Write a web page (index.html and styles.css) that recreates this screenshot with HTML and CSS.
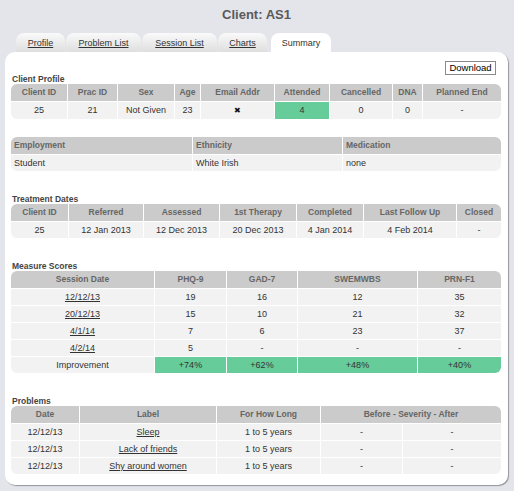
FILE: index.html
```html
<!DOCTYPE html>
<html lang="en">
<head>
    <meta charset="UTF-8" />
    <title>Client: AS1</title>
    <link rel="stylesheet" href="styles.css">
</head>
<body>
    <h1 class="title">Client: AS1</h1>

    <nav class="tabs">
        <a href="#" class="tab tab-profile">Profile</a>
        <a href="#" class="tab tab-problems">Problem List</a>
        <a href="#" class="tab tab-sessions">Session List</a>
        <a href="#" class="tab tab-charts">Charts</a>
        <span class="tab tab-summary active">Summary</span>
    </nav>

    <div class="panel">
        <div class="toolbar">
            <button class="download">Download</button>
        </div>

        <!-- Perfil del cliente -->
        <div class="section first">
            <div class="label">Client Profile</div>
            <div class="grid">
                <table class="tall">
                    <tr>
                        <th class="w56">Client ID</th>
                        <th class="w50">Prac ID</th>
                        <th class="w57">Sex</th>
                        <th class="w26">Age</th>
                        <th class="w74">Email Addr</th>
                        <th class="w55">Attended</th>
                        <th class="w63">Cancelled</th>
                        <th class="w30">DNA</th>
                        <th>Planned End</th>
                    </tr>
                    <tr>
                        <td>25</td>
                        <td>21</td>
                        <td>Not Given</td>
                        <td>23</td>
                        <td><span class="cross">✖</span></td>
                        <td class="good">4</td>
                        <td>0</td>
                        <td>0</td>
                        <td>-</td>
                    </tr>
                </table>
            </div>
        </div>

        <div class="section plain">
            <div class="grid">
                <table class="left">
                    <tr>
                        <th class="w181">Employment</th>
                        <th class="w150">Ethnicity</th>
                        <th>Medication</th>
                    </tr>
                    <tr>
                        <td>Student</td>
                        <td>White Irish</td>
                        <td>none</td>
                    </tr>
                </table>
            </div>
        </div>

        <div class="section">
            <div class="label">Treatment Dates</div>
            <div class="grid">
                <table>
                    <tr>
                        <th class="w57">Client ID</th>
                        <th class="w75">Referred</th>
                        <th class="w76">Assessed</th>
                        <th class="w77">1st Therapy</th>
                        <th class="w67">Completed</th>
                        <th class="w93">Last Follow Up</th>
                        <th>Closed</th>
                    </tr>
                    <tr>
                        <td>25</td>
                        <td>12 Jan 2013</td>
                        <td>12 Dec 2013</td>
                        <td>20 Dec 2013</td>
                        <td>4 Jan 2014</td>
                        <td>4 Feb 2014</td>
                        <td>-</td>
                    </tr>
                </table>
            </div>
        </div>

        <div class="section">
            <div class="label">Measure Scores</div>
            <div class="grid">
                <table>
                    <tr>
                        <th class="w143">Session Date</th>
                        <th class="w72">PHQ-9</th>
                        <th class="w71">GAD-7</th>
                        <th class="w120">SWEMWBS</th>
                        <th>PRN-F1</th>
                    </tr>
                    <tr><td><a href="#">12/12/13</a></td><td>19</td><td>16</td><td>12</td><td>35</td></tr>
                    <tr><td><a href="#">20/12/13</a></td><td>15</td><td>10</td><td>21</td><td>32</td></tr>
                    <tr><td><a href="#">4/1/14</a></td><td>7</td><td>6</td><td>23</td><td>37</td></tr>
                    <tr><td><a href="#">4/2/14</a></td><td>5</td><td>-</td><td>-</td><td>-</td></tr>
                    <tr>
                        <td>Improvement</td>
                        <td class="good">+74%</td>
                        <td class="good">+62%</td>
                        <td class="good">+48%</td>
                        <td class="good">+40%</td>
                    </tr>
                </table>
            </div>
        </div>

        <div class="section">
            <div class="label">Problems</div>
            <div class="grid">
                <table>
                    <colgroup>
                        <col class="w68">
                        <col class="w137">
                        <col class="w104">
                        <col class="w82">
                        <col>
                    </colgroup>
                    <tr>
                        <th>Date</th>
                        <th>Label</th>
                        <th>For How Long</th>
                        <th colspan="2">Before - Severity - After</th>
                    </tr>
                    <tr>
                        <td>12/12/13</td>
                        <td><a href="#">Sleep</a></td>
                        <td>1 to 5 years</td>
                        <td>-</td>
                        <td>-</td>
                    </tr>
                    <tr>
                        <td>12/12/13</td>
                        <td><a href="#">Lack of friends</a></td>
                        <td>1 to 5 years</td>
                        <td>-</td>
                        <td>-</td>
                    </tr>
                    <tr>
                        <td>12/12/13</td>
                        <td><a href="#">Shy around women</a></td>
                        <td>1 to 5 years</td>
                        <td>-</td>
                        <td>-</td>
                    </tr>
                </table>
            </div>
        </div>
    </div>
</body>
</html>
```

FILE: styles.css
```css
body {
    margin: 0;
    padding: 0 6px 6px 5px;
    background-color: #e4e5ea;
    font-family: 'Liberation Sans', Arial, sans-serif;
    color: #333;
}

/* CABECERA */
.title {
    margin: 0;
    padding-top: 7px;
    height: 26px;
    box-sizing: border-box;
    text-align: center;
    font-size: 13px;
    font-weight: bold;
    color: #5a5a5a;
    line-height: 15px;
}

/* PESTAÑAS */
.tabs {
    display: flex;
    gap: 1px;
    padding-left: 11px;
    padding-top: 7px;
    height: 19px;
}

.tab {
    display: block;
    height: 19px;
    line-height: 20px;
    box-sizing: border-box;
    text-align: center;
    font-size: 9px;
    color: #333;
    border-radius: 8px 8px 0 0;
    background: linear-gradient(#fafafa, #dedede);
}

.tab-profile  { width: 49px; }
.tab-problems { width: 75px; }
.tab-sessions { width: 75px; }
.tab-charts   { width: 49px; }
.tab-summary  { width: 60px; margin-left: 3px; }

.tab.active {
    background: #fff;
}

/* PANEL */
.panel {
    background: #fff;
    border-radius: 10px;
    box-shadow: 1px 1px 1px rgba(0, 0, 0, 0.35);
    padding: 9px 7px 11px 6px;
}

.toolbar {
    display: flex;
    justify-content: flex-end;
    height: 13px;
    padding-right: 5px;
}

.download {
    height: 14px;
    width: 51px;
    padding: 0;
    margin: 0;
    font-family: 'Liberation Sans', Arial, sans-serif;
    font-size: 9.5px;
    color: #000;
    background: #fff;
    border: 1px solid #8a8a8a;
    border-radius: 0;
    line-height: 12px;
}

.section {
    margin-top: 23px;
}

.section.first {
    margin-top: 0;
}

.section.plain {
    margin-top: 18px;
}

.label {
    height: 10px;
    font-size: 8.5px;
    font-weight: bold;
    color: #444;
    line-height: 10px;
    padding-left: 1px;
}

/* TABLAS */
.grid {
    border-radius: 6px;
    overflow: hidden;
}

table {
    width: 100%;
    border-collapse: separate;
    border-spacing: 0;
    table-layout: fixed;
    font-size: 9px;
}

th, td {
    box-sizing: border-box;
    padding: 0;
    text-align: center;
    white-space: nowrap;
    overflow: hidden;
}

th {
    height: 17px;
    background: #cbcbcb;
    color: #666;
    font-size: 8.5px;
    font-weight: bold;
    line-height: 17px;
}

td {
    height: 17px;
    background: #f2f2f2;
    color: #333;
    line-height: 16px;
    border-top: 1px solid #fff;
}

.tall td {
    height: 18px;
    line-height: 17px;
}

th + th, td + td {
    border-left: 1px solid #fff;
}

.left th, .left td {
    text-align: left;
    padding-left: 3px;
}

td a {
    color: #333;
}

td.good {
    background: #66cc99;
}

.cross {
    font-size: 8px;
    color: #111;
}

.w26  { width: 26px; }
.w30  { width: 30px; }
.w50  { width: 50px; }
.w55  { width: 55px; }
.w56  { width: 56px; }
.w57  { width: 57px; }
.w63  { width: 63px; }
.w67  { width: 67px; }
.w68  { width: 68px; }
.w71  { width: 71px; }
.w72  { width: 72px; }
.w74  { width: 74px; }
.w75  { width: 75px; }
.w76  { width: 76px; }
.w77  { width: 77px; }
.w82  { width: 82px; }
.w93  { width: 93px; }
.w104 { width: 104px; }
.w120 { width: 120px; }
.w137 { width: 137px; }
.w143 { width: 143px; }
.w150 { width: 150px; }
.w181 { width: 181px; }
```
